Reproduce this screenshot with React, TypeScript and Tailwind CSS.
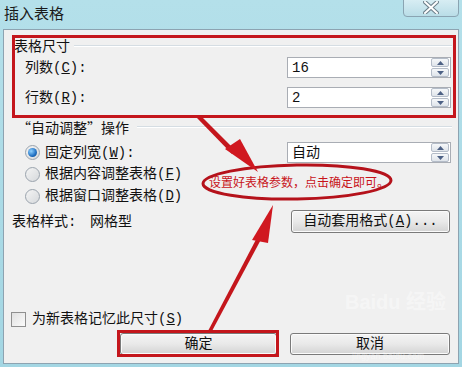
import React from "react";

const font = "font-['Liberation_Mono','Noto_Sans_CJK_SC',monospace]";

function Spin() {
  return (
    <div className="ml-auto mr-[1px] flex flex-col gap-[1px]">
      {["up", "down"].map((d) => (
        <div
          key={d}
          className="w-[18px] h-[9px] flex items-center justify-center rounded-[2px] border border-[#b4bcc8] bg-gradient-to-b from-[#f6f8fa] to-[#dfe4ea]"
        >
          <svg width="7" height="4" viewBox="0 0 7 4">
            {d === "up" ? (
              <polygon points="0,4 3.5,0 7,4" fill="#4d6185" />
            ) : (
              <polygon points="0,0 3.5,4 7,0" fill="#4d6185" />
            )}
          </svg>
        </div>
      ))}
    </div>
  );
}

function SpinBox({ value }: { value: string }) {
  return (
    <div className="w-[164px] h-[21px] flex items-center border border-[#a9adb4] bg-white pl-[4px] text-[14px] text-[#111]">
      <span className="leading-none">{value}</span>
      <Spin />
    </div>
  );
}

function Radio({ checked }: { checked?: boolean }) {
  return (
    <div className="w-[15px] h-[15px] rounded-full border border-[#9aa3ad] bg-gradient-to-br from-[#f4f4f4] to-[#d6d9dc] flex items-center justify-center">
      {checked && (
        <div className="w-[9px] h-[9px] rounded-full bg-[radial-gradient(circle_at_35%_35%,#8fd1ff,#1f6fc2_60%,#0d3f7c)]" />
      )}
    </div>
  );
}

function WinButton({ children, className = "" }: { children: React.ReactNode; className?: string }) {
  return (
    <div
      className={`h-[22px] flex items-center justify-center rounded-[3px] border border-[#7a7a7a] bg-gradient-to-b from-[#f4f4f4] via-[#e9e9e9] to-[#d3d3d3] text-[14px] text-[#111] shadow-[inset_0_0_0_1px_#fbfbfb] ${className}`}
    >
      {children}
    </div>
  );
}

function Annotations() {
  return (
    <svg className="absolute inset-0 pointer-events-none" width="462" height="367" viewBox="0 0 462 367">
      <rect x="13.5" y="36.5" width="441" height="80" fill="none" stroke="#c4161c" strokeWidth="3" />
      <rect x="118.5" y="331.5" width="159" height="24" fill="none" stroke="#c4161c" strokeWidth="3" />
      <ellipse cx="297" cy="182" rx="94" ry="17" fill="none" stroke="#b5121b" strokeWidth="3" transform="rotate(-1 297 182)" />
      {/* arrow from size box to note */}
      <polygon points="197,118 201,116 236,151 232,154" fill="#c4161c" />
      <polygon points="225,149 240,139 258,172" fill="#d01820" />
      {/* arrow from OK button up to note */}
      <polygon points="208,331 212,331 265,232 261,230" fill="#c4161c" />
      <polygon points="252,240 268,243 273,205" fill="#d01820" />
    </svg>
  );
}

export default function App() {
  return (
    <div className={`relative w-[462px] h-[367px] overflow-hidden bg-gradient-to-b from-[#b4e0ea] to-[#a3d6e3] ${font}`}>
      {/* title bar */}
      <div className="h-[29px] flex items-start">
        <div className="pl-[4px] pt-[3px] text-[15px] leading-[20px] text-[#1a1a1a] font-['Noto_Sans_CJK_SC',sans-serif]">插入表格</div>
        <div className="ml-auto mr-[3px] mt-[-2px] w-[56px] h-[19px] rounded-b-[4px] border border-[#8aa4b2] bg-gradient-to-b from-[#d9eef4] to-[#b9dde7] flex items-center justify-center">
          <svg width="16" height="13" viewBox="0 0 16 13">
            <path d="M2 1 L14 12 M14 1 L2 12" stroke="#6c7f8a" strokeWidth="4" strokeLinecap="square" />
            <path d="M2 1 L14 12 M14 1 L2 12" stroke="#ffffff" strokeWidth="2" strokeLinecap="square" />
          </svg>
        </div>
      </div>

      {/* dialog body */}
      <div className="mx-[3px] h-[335px] border border-[#8da3b1] bg-[#f0f0f0] flex flex-col pt-[7px] pb-[8px] pr-[6px] text-[14px] text-[#111]">
        <div className="h-[20px] flex items-center pl-[10px]">
          <span className="leading-none">表格尺寸</span>
          <div className="flex-1 ml-[4px] mt-[-2px] border-t border-[#d5dde3] border-b border-b-white" />
        </div>
        <div className="h-[21px] flex items-center pl-[21px]">
          <span className="leading-none">列数(<u>C</u>):</span>
          <div className="ml-auto mr-[1px]"><SpinBox value="16" /></div>
        </div>
        <div className="h-[21px] mt-[9px] flex items-center pl-[21px]">
          <span className="leading-none">行数(<u>R</u>):</span>
          <div className="ml-auto mr-[1px]"><SpinBox value="2" /></div>
        </div>

        <div className="h-[20px] mt-[10px] flex items-center pl-[13px]">
          <span className="leading-none">
            <span className="font-['Noto_Sans_CJK_SC',sans-serif]">“</span>自动调整<span className="font-['Noto_Sans_CJK_SC',sans-serif]">”</span>操作
          </span>
          <div className="flex-1 ml-[8px] mt-[-2px] border-t border-[#d5dde3] border-b border-b-white" />
        </div>
        <div className="h-[21px] mt-[4px] flex items-center pl-[21px] gap-[5px]">
          <Radio checked />
          <span className="leading-none">固定列宽(<u>W</u>):</span>
          <div className="ml-auto mr-[1px]"><SpinBox value="自动" /></div>
        </div>
        <div className="h-[22px] flex items-center pl-[21px] gap-[5px]">
          <Radio />
          <span className="leading-none">根据内容调整表格(<u>F</u>)</span>
        </div>
        <div className="h-[22px] flex items-center pl-[21px] gap-[5px]">
          <Radio />
          <span className="leading-none">根据窗口调整表格(<u>D</u>)</span>
        </div>
        <div className="h-[23px] mt-[3px] flex items-center pl-[8px]">
          <span className="leading-none w-[78px]">表格样式:</span>
          <span className="leading-none">网格型</span>
          <WinButton className="ml-auto mr-[2px] w-[159px] h-[23px]">
            自动套用格式(<u>A</u>)...
          </WinButton>
        </div>

        <div className="flex-1" />

        <div className="h-[16px] flex items-center pl-[7px] gap-[6px]">
          <div className="w-[15px] h-[15px] border border-[#8f8f8f] bg-gradient-to-br from-[#e0e0e0] to-[#fbfbfb]" />
          <span className="leading-none">为新表格记忆此尺寸(<u>S</u>)</span>
        </div>
        <div className="h-[22px] mt-[6px] flex items-center">
          <WinButton className="ml-[116px] w-[157px]">确定</WinButton>
          <WinButton className="ml-auto mr-[2px] w-[160px]">取消</WinButton>
        </div>
      </div>

      {/* annotation note */}
      <div className="absolute left-[209px] top-[175px] text-[12px] leading-[14px] text-[#c8141b] font-['Noto_Sans_CJK_SC',sans-serif]">
        设置好表格参数，点击确定即可。
      </div>
      {/* faint watermark */}
      <div className="absolute left-[345px] top-[292px] text-[20px] font-bold leading-none text-white/40 font-['Liberation_Sans','Noto_Sans_CJK_SC',sans-serif]">
        Baidu 经验
      </div>
      <div className="absolute left-[352px] top-[352px] text-[9px] leading-none text-white/40 font-['Liberation_Sans',sans-serif]">
        jingyan.baidu.com
      </div>
      <Annotations />
    </div>
  );
}
